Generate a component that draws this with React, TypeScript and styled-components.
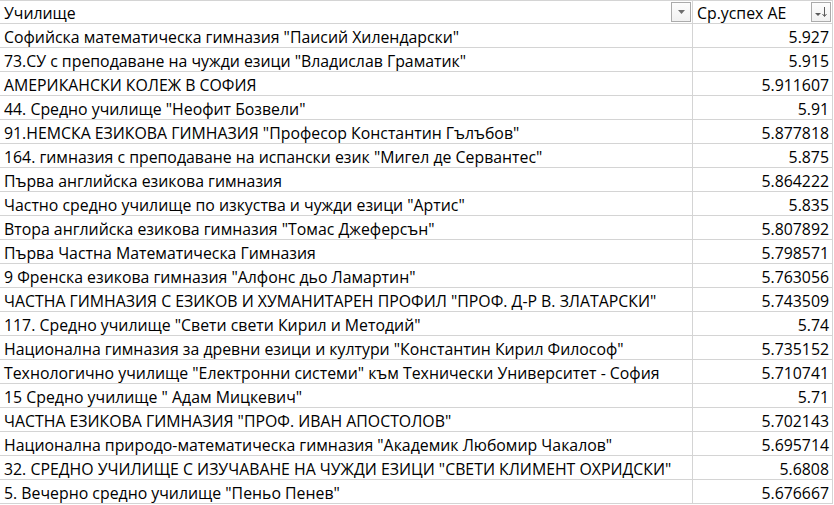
import React from "react";
import styled, { createGlobalStyle } from "styled-components";

const Global = createGlobalStyle`
  html, body { margin: 0; padding: 0; background: #ffffff; }
  body { font-family: "Open Sans", sans-serif; }
`;

const rows: [string, string][] = [
  ['Софийска математическа гимназия "Паисий Хилендарски"', "5.927"],
  ['73.СУ с преподаване на чужди езици "Владислав Граматик"', "5.915"],
  ["АМЕРИКАНСКИ КОЛЕЖ В СОФИЯ", "5.911607"],
  ['44. Средно училище "Неофит Бозвели"', "5.91"],
  ['91.НЕМСКА ЕЗИКОВА ГИМНАЗИЯ "Професор Константин Гълъбов"', "5.877818"],
  ['164. гимназия с преподаване на испански език "Мигел де Сервантес"', "5.875"],
  ["Първа английска езикова гимназия", "5.864222"],
  ['Частно средно училище по изкуства и чужди езици "Артис"', "5.835"],
  ['Втора английска езикова гимназия "Томас Джеферсън"', "5.807892"],
  ["Първа Частна Математическа Гимназия", "5.798571"],
  ['9 Френска езикова гимназия "Алфонс дьо Ламартин"', "5.763056"],
  ['ЧАСТНА ГИМНАЗИЯ С ЕЗИКОВ И ХУМАНИТАРЕН ПРОФИЛ "ПРОФ. Д-Р В. ЗЛАТАРСКИ"', "5.743509"],
  ['117. Средно училище "Свети свети Кирил и Методий"', "5.74"],
  ['Национална гимназия за древни езици и култури "Константин Кирил Философ"', "5.735152"],
  ['Технологично училище "Електронни системи" към Технически Университет - София', "5.710741"],
  ['15 Средно училище " Адам Мицкевич"', "5.71"],
  ['ЧАСТНА ЕЗИКОВА ГИМНАЗИЯ "ПРОФ. ИВАН АПОСТОЛОВ"', "5.702143"],
  ['Национална природо-математическа гимназия "Академик Любомир Чакалов"', "5.695714"],
  ['32. СРЕДНО УЧИЛИЩЕ С ИЗУЧАВАНЕ НА ЧУЖДИ ЕЗИЦИ "СВЕТИ КЛИМЕНТ ОХРИДСКИ"', "5.6808"],
  ['5. Вечерно средно училище "Пеньо Пенев"', "5.676667"],
];

const Sheet = styled.div`
  display: grid;
  grid-template-columns: 693px 140px;
  border-top: 1px solid #d4d4d4;
  width: 833px;
  font-family: "Open Sans", sans-serif;
  font-size: 15.85px;
  line-height: 22px;
  color: #000000;
`;

const Cell = styled.div<{ $right?: boolean; $header?: boolean }>`
  box-sizing: border-box;
  height: ${(p) => (p.$header ? "23px" : "24px")};
  border-bottom: 1px solid #d4d4d4;
  border-right: 1px solid #d4d4d4;
  display: flex;
  align-items: center;
  justify-content: ${(p) => (p.$right ? "flex-end" : "flex-start")};
  padding: ${(p) => (p.$header ? "0" : "2px")} ${(p) => (p.$right ? "3px" : "4px")} 0 4px;
  white-space: nowrap;
  overflow: hidden;
  gap: 4px;
`;

const HeaderLabel = styled.span`
  flex: 1;
  padding-top: 1px;
`;

const FilterButton = styled.div`
  box-sizing: border-box;
  width: 20px;
  height: 20px;
  flex: none;
  border: 1px solid #ababab;
  background: linear-gradient(#fdfdfd, #f1f1f1);
  display: flex;
  align-items: center;
  justify-content: center;
  margin-right: -3px;
`;

const DownTriangle = () => (
  <svg width="9" height="5" viewBox="0 0 9 5">
    <path d="M1 0 L8 0 L4.5 4 Z" fill="#6d6d6d" />
  </svg>
);

const SortIcon = () => (
  <svg width="14" height="14" viewBox="0 0 14 14">
    <path d="M1 8 L7 8 L4 11 Z" fill="#5a5a5a" />
    <path d="M10.5 2 L10.5 11" stroke="#5a5a5a" strokeWidth="1" />
    <path d="M8.5 9 L10.5 11.5 L12.5 9" stroke="#5a5a5a" strokeWidth="1" fill="none" />
  </svg>
);

export default function App() {
  return (
    <>
      <Global />
      <Sheet>
        <Cell $header>
          <HeaderLabel>Училище</HeaderLabel>
          <FilterButton>
            <DownTriangle />
          </FilterButton>
        </Cell>
        <Cell $header>
          <HeaderLabel>Ср.успех АЕ</HeaderLabel>
          <FilterButton>
            <SortIcon />
          </FilterButton>
        </Cell>
        {rows.map(([name, score]) => (
          <React.Fragment key={name}>
            <Cell>{name}</Cell>
            <Cell $right>{score}</Cell>
          </React.Fragment>
        ))}
      </Sheet>
    </>
  );
}
